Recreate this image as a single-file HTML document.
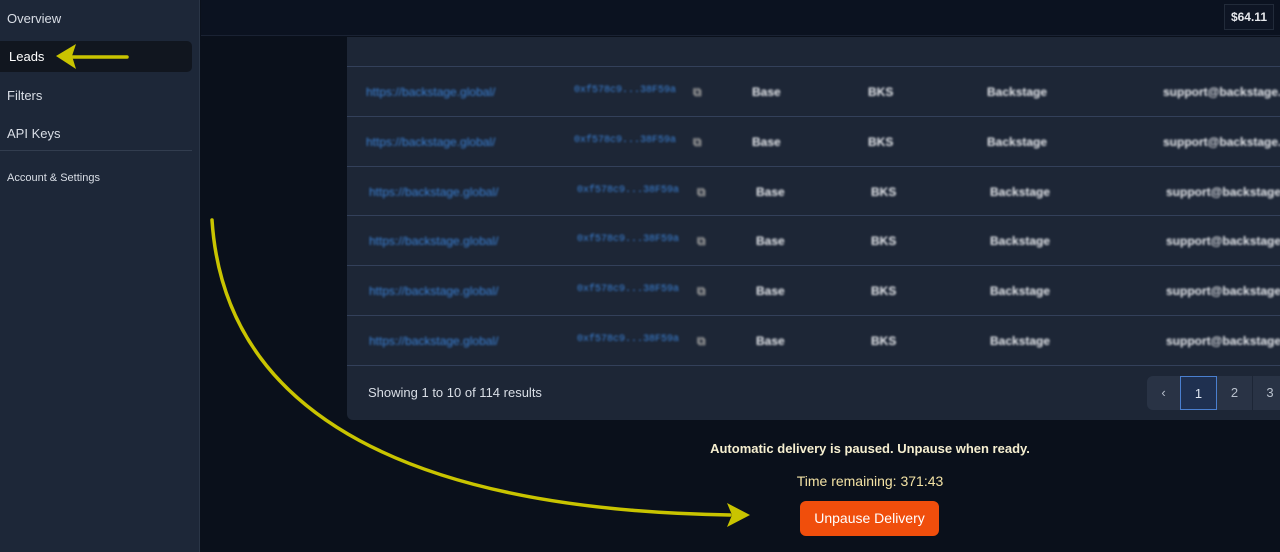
<!DOCTYPE html>
<html><head><style>
*{margin:0;padding:0;box-sizing:border-box}
body{width:1280px;height:552px;overflow:hidden;background:#0a101b;font-family:"Liberation Sans",sans-serif;position:relative}
.side{position:absolute;left:0;top:0;width:200px;height:552px;background:#1d2738;border-right:1px solid #2a3546}
.side div{position:absolute;left:7px;color:#d9dee6;font-size:13px}
.top{position:absolute;left:201px;top:0;right:0;height:36px;background:#0b1220;border-bottom:1px solid #1a2233}
.bal{position:absolute;right:6px;top:4px;padding:5px 6px;border:1px solid #222b3a;background:#0e1524;color:#e6e8ec;font-size:12px;font-weight:bold}
.panel{position:absolute;left:347px;top:37px;width:940px;height:383px;background:#1d2636;border-radius:0 0 0 6px}
.row{position:absolute;left:0;right:0;border-top:1px solid #33405a;height:50px}
.row span{position:absolute;top:18px;font-size:12px;filter:blur(1.1px)}
.l{color:#3b82d6}.h{color:#3b82d6;font-family:"Liberation Mono",monospace;font-size:10px!important}.w{color:#e8eaee;font-weight:bold}
.foot{position:absolute;left:21px;top:348px;color:#d9dee6;font-size:13px}
.pg{position:absolute;left:800px;top:339px;width:140px;height:34px;background:#293345;border-radius:6px}
.pg div{position:absolute;top:0;height:34px;line-height:34px;text-align:center;color:#b8c0cc;font-size:13px}
.msg{position:absolute;left:600px;width:540px;text-align:center;color:#f3e2a5;font-size:13px}
.btn{position:absolute;left:800px;top:501px;width:139px;height:35px;background:#f04e0c;border-radius:6px;color:#fff;font-size:14px;line-height:35px;text-align:center}
</style></head><body>
<div class="side">
<div style="top:11px">Overview</div>
<div style="left:0;top:41px;width:192px;height:31px;background:#11161f;border-radius:0 5px 5px 0"></div>
<div style="left:9px;top:49px;color:#fff">Leads</div>
<div style="top:88px">Filters</div>
<div style="top:126px">API Keys</div>
<div style="left:0;top:150px;width:192px;height:1px;background:#323d4f"></div>
<div style="top:172px;font-size:11px">Account &amp; Settings</div>
</div>
<div class="top"><div class="bal">$64.11</div></div>
<div class="panel">
<div class="row" style="top:29px"><span class="l" style="left:19px">https://backstage.global/</span><span class="h" style="left:227px">0xf578c9...38F59a</span><span class="w" style="left:346px;color:#999">⧉</span><span class="w" style="left:405px">Base</span><span class="w" style="left:521px">BKS</span><span class="w" style="left:640px">Backstage</span><span class="w" style="left:816px">support@backstage.g</span></div>
<div class="row" style="top:79px"><span class="l" style="left:19px">https://backstage.global/</span><span class="h" style="left:227px">0xf578c9...38F59a</span><span class="w" style="left:346px;color:#999">⧉</span><span class="w" style="left:405px">Base</span><span class="w" style="left:521px">BKS</span><span class="w" style="left:640px">Backstage</span><span class="w" style="left:816px">support@backstage.g</span></div>
<div class="row" style="top:129px"><span class="l" style="left:22px">https://backstage.global/</span><span class="h" style="left:230px">0xf578c9...38F59a</span><span class="w" style="left:350px;color:#999">⧉</span><span class="w" style="left:409px">Base</span><span class="w" style="left:524px">BKS</span><span class="w" style="left:643px">Backstage</span><span class="w" style="left:819px">support@backstage.</span></div>
<div class="row" style="top:178px"><span class="l" style="left:22px">https://backstage.global/</span><span class="h" style="left:230px">0xf578c9...38F59a</span><span class="w" style="left:350px;color:#999">⧉</span><span class="w" style="left:409px">Base</span><span class="w" style="left:524px">BKS</span><span class="w" style="left:643px">Backstage</span><span class="w" style="left:819px">support@backstage.</span></div>
<div class="row" style="top:228px"><span class="l" style="left:22px">https://backstage.global/</span><span class="h" style="left:230px">0xf578c9...38F59a</span><span class="w" style="left:350px;color:#999">⧉</span><span class="w" style="left:409px">Base</span><span class="w" style="left:524px">BKS</span><span class="w" style="left:643px">Backstage</span><span class="w" style="left:819px">support@backstage.</span></div>
<div class="row" style="top:278px"><span class="l" style="left:22px">https://backstage.global/</span><span class="h" style="left:230px">0xf578c9...38F59a</span><span class="w" style="left:350px;color:#999">⧉</span><span class="w" style="left:409px">Base</span><span class="w" style="left:524px">BKS</span><span class="w" style="left:643px">Backstage</span><span class="w" style="left:819px">support@backstage.</span></div>
<div class="row" style="top:328px;height:1px"></div>
<div class="foot">Showing 1 to 10 of 114 results</div>
<div class="pg"><div style="left:0;width:33px">‹</div><div style="left:33px;width:37px;background:#1f3050;border:1px solid #4a7fcf;color:#dfe6f2">1</div><div style="left:70px;width:36px;border-right:1px solid #1d2636">2</div><div style="left:106px;width:34px">3</div></div>
</div>
<div class="msg" style="top:441px;font-weight:bold;color:#f6efd0">Automatic delivery is paused. Unpause when ready.</div>
<div class="msg" style="top:473px;font-size:14px">Time remaining: 371:43</div>
<div class="btn">Unpause Delivery</div>
<svg style="position:absolute;left:0;top:0" width="1280" height="552">
<g stroke="#c9c400" fill="none" stroke-width="3.5" stroke-linecap="round">
<path d="M127 57 L70 57"/>
<path d="M212 220 C 225 420, 420 510, 730 515"/>
</g>
<g fill="#c9c400"><path d="M56 56 L76 44 L72 56 L76 69 Z"/><path d="M750 515 L727 503 L732 515 L727 527 Z"/></g>
</svg>
</body></html>
